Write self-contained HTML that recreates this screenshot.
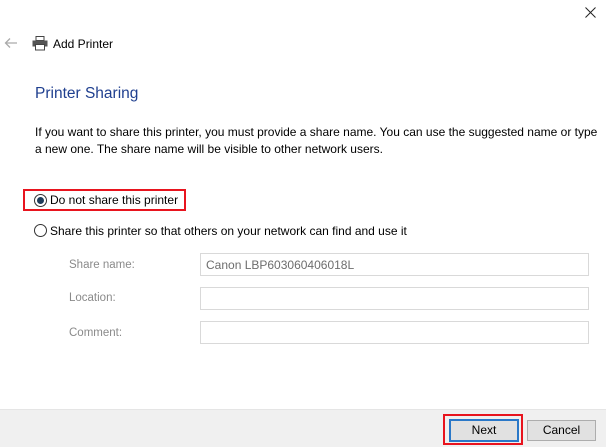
<!DOCTYPE html>
<html><head><style>
body{margin:0;width:606px;height:446px;background:#fff;font-family:"Liberation Sans",sans-serif;position:relative;overflow:hidden;font-size:12px;color:#000}
.a{position:absolute;white-space:nowrap}
.box{position:absolute;left:200px;width:387px;height:21px;border:1px solid #d9d9d9;background:#fff}
.lbl{position:absolute;left:69px;color:#8a8a8a;font-size:11.5px}
.radio{position:absolute;width:11px;height:11px;border:1px solid #333;border-radius:50%;background:#fff}
.btn{position:absolute;top:420px;height:19px;border:1px solid #adadad;background:#e1e1e1;text-align:center;line-height:19px;font-size:12px}
</style></head><body>
<svg class="a" style="left:585px;top:7px" width="11" height="11"><path d="M0.5 0.5L10.5 10.5M10.5 0.5L0.5 10.5" stroke="#222" stroke-width="1"/></svg>
<svg class="a" style="left:4px;top:37px" width="14" height="12"><path d="M13 6H2M6 1.5L1.5 6 6 10.5" stroke="#aaa" stroke-width="1.3" fill="none"/></svg>
<svg class="a" style="left:32px;top:36px" width="16" height="15"><rect x="4" y="0.5" width="8" height="4" fill="#fff" stroke="#444"/><rect x="0.5" y="4.5" width="15" height="6" fill="#555"/><rect x="3.5" y="8.5" width="9" height="5.5" fill="#fff" stroke="#444"/></svg>
<div class="a" style="left:53px;top:37px;font-size:12px">Add Printer</div>
<div class="a" style="left:35px;top:85px;font-size:15.5px;color:#1f3f8f">Printer Sharing</div>
<div class="a" style="left:35px;top:124px;line-height:17px">If you want to share this printer, you must provide a share name. You can use the suggested name or type<br>a new one. The share name will be visible to other network users.</div>
<div class="a" style="left:23px;top:189px;width:163px;height:22px;border:2px solid #e8141e;box-sizing:border-box"></div>
<div class="radio" style="left:34px;top:194px"><div style="position:absolute;left:2px;top:2px;width:7px;height:7px;border-radius:50%;background:#1e3c5a"></div></div>
<div class="a" style="left:50px;top:193px">Do not share this printer</div>
<div class="radio" style="left:34px;top:224px"></div>
<div class="a" style="left:50px;top:224px">Share this printer so that others on your network can find and use it</div>
<div class="lbl" style="top:259px">Share name:</div>
<div class="box" style="top:253px"><span style="position:absolute;left:5px;top:4px;color:#6d6d6d">Canon LBP603060406018L</span></div>
<div class="lbl" style="top:292px">Location:</div>
<div class="box" style="top:287px"></div>
<div class="lbl" style="top:327px">Comment:</div>
<div class="box" style="top:321px"></div>
<div class="a" style="left:0;top:409px;width:606px;height:37px;background:#f0f0f0;border-top:1px solid #e5e5e5"></div>
<div class="a" style="left:443px;top:414px;width:80px;height:31px;border:2px solid #e8141e;box-sizing:border-box"></div>
<div class="btn" style="left:449px;width:66px;border:2px solid #2a78c8;top:419px">Next</div>
<div class="btn" style="left:527px;width:67px">Cancel</div>
</body></html>
